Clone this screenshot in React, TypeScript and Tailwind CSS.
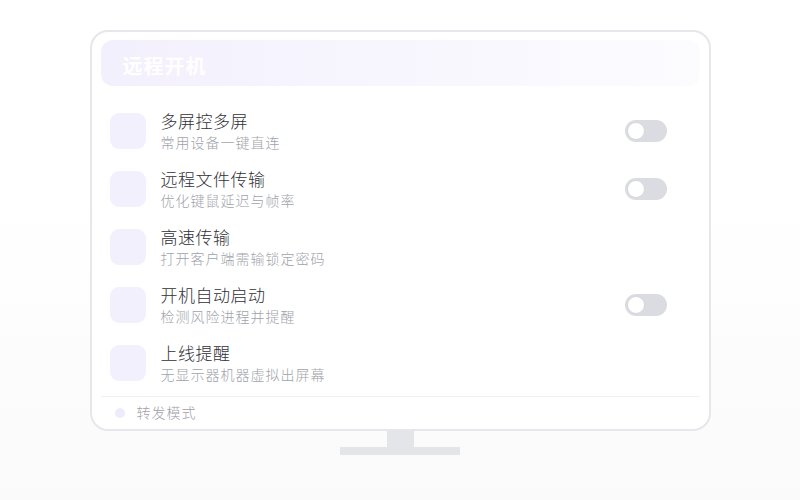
import React from "react";

const rows = [
  { t: "多屏控多屏", s: "常用设备一键直连", toggle: true },
  { t: "远程文件传输", s: "优化键鼠延迟与帧率", toggle: true },
  { t: "高速传输", s: "打开客户端需输锁定密码", toggle: false },
  { t: "开机自动启动", s: "检测风险进程并提醒", toggle: true },
  { t: "上线提醒", s: "无显示器机器虚拟出屏幕", toggle: false },
];

function Toggle() {
  return (
    <div className="w-[42px] h-[22px] rounded-full bg-[#dadce2] flex items-center px-[2px]">
      <div className="w-[18px] h-[18px] rounded-full bg-white border border-[#d6d8de]" />
    </div>
  );
}

export default function App() {
  return (
    <div
      className="w-[800px] h-[500px] flex flex-col items-center pt-[30px] bg-gradient-to-b from-white from-40% to-[#fafafb]"
      style={{ fontFamily: '"Noto Sans CJK SC", "Noto Sans", sans-serif' }}
    >
      <div className="w-[621px] h-[401px] rounded-[18px] border-2 border-[#e6e7eb] bg-white flex flex-col pt-[8px] px-[9px]">
        <div className="h-[46px] rounded-[12px] bg-gradient-to-r from-[#f3f0fd] to-[#fcfcff] flex items-center pl-[22px] pt-[5px]">
          <span className="text-white text-[20px] font-bold tracking-[1px] leading-none">远程开机</span>
        </div>
        <div className="flex flex-col pt-[16px]">
          {rows.map((r) => (
            <div key={r.t} className="h-[58px] flex items-center pl-[9px] pr-[33px]">
              <div className="w-[36px] h-[36px] rounded-[9px] bg-[#f3f0fd] shrink-0" />
              <div className="ml-[15px] flex flex-col flex-1">
                <span className="text-[17px] leading-[22px] tracking-[0.5px] font-light text-[#303136]">{r.t}</span>
                <span className="text-[14px] leading-[20px] tracking-[1px] font-light text-[#a0a3aa]">{r.s}</span>
              </div>
              {r.toggle && <Toggle />}
            </div>
          ))}
        </div>
        <div className="mt-[4px] border-t border-[#eef0f3] h-[32px] flex items-center pl-[14px]">
          <div className="w-[10px] h-[10px] rounded-full bg-[#eeebfc]" />
          <span className="ml-[12px] text-[14px] tracking-[1px] font-light text-[#9ea1a8]">转发模式</span>
        </div>
      </div>
      <div className="w-[27px] h-[16px] bg-[#e3e5e9]" />
      <div className="w-[120px] h-[8px] bg-[#e3e5e9]" />
    </div>
  );
}
